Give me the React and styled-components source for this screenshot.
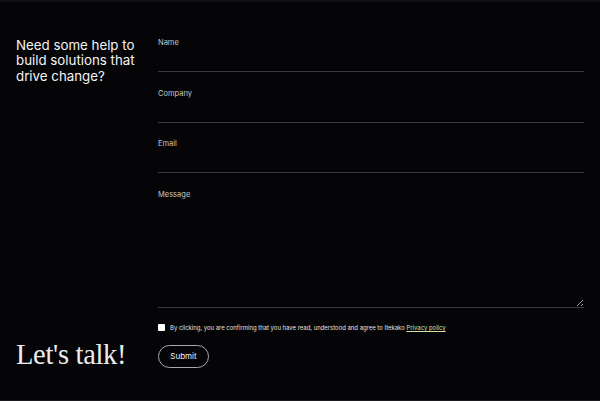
import React from "react";
import styled, { createGlobalStyle } from "styled-components";

const Global = createGlobalStyle`
  html, body { margin: 0; padding: 0; background: #050407; }
  body { font-family: Inter, "Noto Sans", sans-serif; color: #f2f2f2; }
  * { box-sizing: border-box; }
`;

const Page = styled.div`
  height: 401px;
  display: grid;
  grid-template-columns: 142px 1fr;
  padding: 38px 16px 0 16px;
  border-top: 2px solid #111014;
  border-bottom: 1px solid #1c1b1f;
`;

const Side = styled.div`
  display: flex;
  flex-direction: column;
  justify-content: space-between;
  height: 331px;
  margin-top: -2px;
`;

const Heading = styled.h2`
  margin: 0;
  font-size: 13.3px;
  line-height: 15.3px;
  font-weight: 400;
  letter-spacing: 0;
  color: #f4f4f4;
`;

const Talk = styled.div`
  font-family: "Liberation Serif", "DejaVu Serif", serif;
  font-size: 28.5px;
  line-height: 28px;
  font-weight: 400;
  letter-spacing: -0.3px;
  color: #ececec;
`;

const Form = styled.form`
  display: flex;
  flex-direction: column;
  margin-top: -2px;
`;

const Field = styled.label`
  display: flex;
  flex-direction: column;
  margin-bottom: ${(p) => p.$gap || 16.5}px;
`;

const Label = styled.span`
  font-size: 7.5px;
  line-height: 10px;
  color: #c8c8c8;
`;

const Input = styled.input`
  height: 24px;
  background: transparent;
  border: none;
  border-bottom: 1px solid #3a3a3d;
  outline: none;
  color: #fff;
  font-family: inherit;
  font-size: 10px;
  padding: 0;
`;

const Area = styled.textarea`
  height: 108px;
  background: transparent;
  border: none;
  border-bottom: 1px solid #3a3a3d;
  outline: none;
  color: #fff;
  font-family: inherit;
  font-size: 10px;
  padding: 0;
  resize: vertical;
`;

const Consent = styled.label`
  display: flex;
  align-items: center;
  gap: 5px;
  height: 10px;
  font-size: 5.95px;
  color: #e2e2e2;
  white-space: nowrap;
`;

const Check = styled.input`
  appearance: none;
  margin: 0;
  width: 7px;
  height: 7px;
  background: #fff;
  border-radius: 1px;
`;

const Policy = styled.a`
  color: #d6e2a4;
  text-decoration: underline;
`;

const Submit = styled.button`
  margin-top: 12px;
  width: 51px;
  height: 23px;
  border: 1px solid #a9a9a9;
  border-radius: 12px;
  background: transparent;
  color: #f2f2f2;
  font-family: inherit;
  font-size: 8px;
  padding: 0;
  cursor: pointer;
`;

export default function App() {
  return (
    <>
      <Global />
      <Page>
        <Side>
          <Heading>
            Need some help to
            <br />
            build solutions that
            <br />
            drive change?
          </Heading>
          <Talk>Let's talk!</Talk>
        </Side>
        <Form onSubmit={(e) => e.preventDefault()}>
          <Field>
            <Label>Name</Label>
            <Input type="text" />
          </Field>
          <Field>
            <Label>Company</Label>
            <Input type="text" />
          </Field>
          <Field>
            <Label>Email</Label>
            <Input type="email" />
          </Field>
          <Field $gap={15}>
            <Label>Message</Label>
            <Area />
          </Field>
          <Consent>
            <Check type="checkbox" />
            <span>
              By clicking, you are confirming that you have read, understood and agree to Itekako{" "}
              <Policy href="#">Privacy policy</Policy>
            </span>
          </Consent>
          <Submit type="submit">Submit</Submit>
        </Form>
      </Page>
    </>
  );
}
